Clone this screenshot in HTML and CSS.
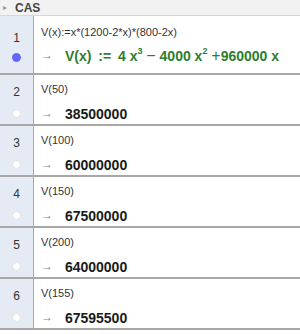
FILE: index.html
```html
<!DOCTYPE html>
<html lang="en">
<head>
    <meta charset="UTF-8">
    <title>CAS</title>
    <link rel="stylesheet" href="styles.css">
</head>
<body>
    <!-- Title bar of the view -->
    <div class="titlebar">
        <span class="toggle">&#9656;</span>
        <span class="title">CAS</span>
    </div>

    <!-- CAS rows -->
    <div class="rows">
        <div class="row first">
            <div class="num"><span>1</span><i class="dot on"></i></div>
            <div class="cell">
                <div class="input">V(x):=x*(1200-2*x)*(800-2x)</div>
                <div class="output green"><span class="arrow">&rarr;</span> V(x) <span class="sp">:=</span> 4 x<sup>3</sup> <span class="op">&minus;</span> 4000 x<sup>2</sup> <span class="op">+</span>960000 x</div>
            </div>
        </div>
        <div class="row">
            <div class="num"><span>2</span><i class="dot"></i></div>
            <div class="cell">
                <div class="input">V(50)</div>
                <div class="output"><span class="arrow">&rarr;</span> 38500000</div>
            </div>
        </div>
        <div class="row">
            <div class="num"><span>3</span><i class="dot"></i></div>
            <div class="cell">
                <div class="input">V(100)</div>
                <div class="output"><span class="arrow">&rarr;</span> 60000000</div>
            </div>
        </div>
        <div class="row">
            <div class="num"><span>4</span><i class="dot"></i></div>
            <div class="cell">
                <div class="input">V(150)</div>
                <div class="output"><span class="arrow">&rarr;</span> 67500000</div>
            </div>
        </div>
        <div class="row">
            <div class="num"><span>5</span><i class="dot"></i></div>
            <div class="cell">
                <div class="input">V(200)</div>
                <div class="output"><span class="arrow">&rarr;</span> 64000000</div>
            </div>
        </div>
        <div class="row">
            <div class="num"><span>6</span><i class="dot"></i></div>
            <div class="cell">
                <div class="input">V(155)</div>
                <div class="output"><span class="arrow">&rarr;</span> 67595500</div>
            </div>
        </div>
    </div>
</body>
</html>
```
FILE: styles.css
```css
/* Whole page */
body {
    margin: 0;
    width: 300px;
    height: 334px;
    overflow: hidden;
    background-color: #ffffff;
    font-family: 'Liberation Sans', Arial, sans-serif;
    color: #333333;
}

/* Title bar */
.titlebar {
    height: 15px;
    display: flex;
    align-items: center;
    background-color: #f2f2f2;
    border-bottom: 1px solid #d6d6d6;
}

.toggle {
    font-size: 8px;
    color: #9a9a9a;
    margin-left: 3px;
    width: 12px;
}

.title {
    font-size: 12px;
    font-weight: bold;
    color: #444444;
}

/* One CAS row */
.row {
    display: flex;
    height: 49px;
    border-bottom: 2px solid #a8a8a8;
}

.row.first {
    height: 57px;
}

/* Row number column */
.num {
    width: 34px;
    flex: none;
    background-color: #e4ebf5;
    border-right: 1px solid #a8a8a8;
    display: flex;
    flex-direction: column;
    align-items: center;
    padding-top: 10px;
    box-sizing: border-box;
    font-size: 12px;
    color: #333333;
}

.row.first .num {
    padding-top: 15px;
}

.dot {
    display: block;
    width: 7px;
    height: 7px;
    margin-top: 10px;
    border-radius: 50%;
    background-color: #ffffff;
    border: 1px solid #e2e2e2;
}

.dot.on {
    background-color: #6464ff;
    border-color: #6464ff;
    margin-top: 8px;
}

/* Input and output */
.cell {
    padding-left: 7px;
    padding-top: 8px;
}

.row.first .cell {
    padding-top: 10px;
}

.input {
    font-size: 11px;
    height: 13px;
    line-height: 13px;
}

.output {
    margin-top: 10px;
    font-size: 14px;
    font-weight: bold;
    color: #1a1a1a;
    white-space: nowrap;
}

.row.first .output {
    margin-top: 8px;
}

.output.green {
    color: #2e7d2e;
    font-size: 14px;
}

.arrow {
    font-weight: normal;
    font-size: 12px;
    color: #888888;
    margin-right: 8px;
    vertical-align: 2px;
}

.sp {
    margin: 0 3px;
}

.op {
    font-weight: normal;
    font-size: 16px;
}

sup {
    font-size: 9px;
    vertical-align: 7px;
    line-height: 0;
}
```
